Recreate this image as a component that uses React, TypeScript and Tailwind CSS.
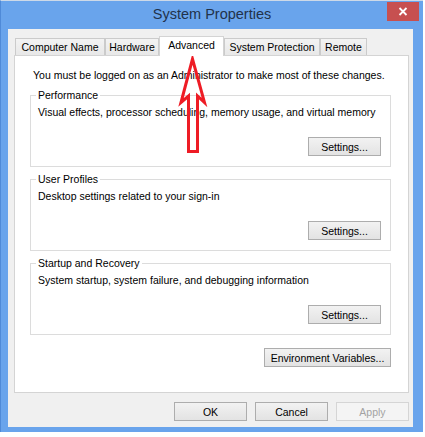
import React from "react";

const btn =
  "h-[19px] flex items-center justify-center border border-[#adadad] bg-gradient-to-b from-[#f2f2f2] to-[#e3e3e3] text-black leading-[12px]";

function Tab({ label, w, selected }: { label: string; w: string; selected?: boolean }) {
  if (selected) {
    return (
      <div
        className={`${w} h-[20px] -mb-px relative z-10 bg-white border border-b-0 border-[#d4d4d4] flex justify-center pt-[2px] leading-[12px]`}
      >
        {label}
      </div>
    );
  }
  return (
    <div
      className={`${w} h-[17px] bg-gradient-to-b from-[#f3f3f3] to-[#e8e8e8] border border-b-0 border-[#cbcbcb] flex items-center justify-center leading-[12px]`}
    >
      {label}
    </div>
  );
}

function Group({
  title,
  desc,
  focused,
  first,
}: {
  title: string;
  desc: string;
  focused?: boolean;
  first?: boolean;
}) {
  return (
    <div
      className={`${first ? "mt-[14px]" : "mt-[12px]"} h-[72px] border border-[#dcdcdc] flex flex-col pl-[7px]`}
    >
      <span className="-mt-[7px] -ml-[2px] px-[2px] self-start bg-white leading-[12px]">{title}</span>
      <div className="mt-[5px] leading-[12px]">{desc}</div>
      <div
        className={`${btn} w-[73px] self-end mt-auto mb-[10px] mr-[9px] ${
          focused ? "border-[#5a9fe0]" : ""
        }`}
      >
        Settings...
      </div>
    </div>
  );
}

export default function App() {
  return (
    <div
      className="w-[425px] h-[437px] bg-white relative text-[10.5px] text-black"
      style={{ fontFamily: "'Liberation Sans', Arial, sans-serif" }}
    >
      <div className="w-[423px] h-[432px] bg-[#69a4ec] border-t border-[#cdd9e8] border-l border-l-[#4f8ad8] flex flex-col relative">
        <div className="h-[28px] flex items-center justify-center text-[14.5px] text-[#22324a]">
          System Properties
        </div>
        <div className="absolute right-[4px] top-[1px] w-[32px] h-[19px] bg-[#c75050] flex items-center justify-center">
          <svg width="10" height="9" viewBox="0 0 10 9">
            <path d="M1.5 1 L8.5 8 M8.5 1 L1.5 8" stroke="white" strokeWidth="1.8" />
          </svg>
        </div>
        <div className="ml-[7px] w-[405px] h-[398px] bg-[#f0f0f0] flex flex-col pl-[6px] pr-[4px]">
          <div className="h-[26px] flex items-end pl-[1px]">
            <Tab label="Computer Name" w="w-[90px]" />
            <Tab label="Hardware" w="w-[54px]" />
            <Tab label="Advanced" w="w-[65px]" selected />
            <Tab label="System Protection" w="w-[96px]" />
            <Tab label="Remote" w="w-[47px]" />
          </div>
          <div className="h-[338px] bg-white border border-[#d4d4d4] flex flex-col pl-[15px] pr-[17px] pt-[13px]">
            <div className="ml-[3px] leading-[12px]">
              You must be logged on as an Administrator to make most of these changes.
            </div>
            <Group
              first
              focused
              title="Performance"
              desc="Visual effects, processor scheduling, memory usage, and virtual memory"
            />
            <Group title="User Profiles" desc="Desktop settings related to your sign-in" />
            <Group
              title="Startup and Recovery"
              desc="System startup, system failure, and debugging information"
            />
            <div className={`${btn} w-[127px] self-end mt-[13px]`}>Environment Variables...</div>
          </div>
          <div className="mt-[9px] flex justify-end gap-[8px]">
            <div className={`${btn} w-[73px]`}>OK</div>
            <div className={`${btn} w-[73px]`}>Cancel</div>
            <div className="w-[73px] h-[19px] flex items-center justify-center border border-[#d5d5d5] bg-[#f4f4f4] text-[#a3a3a3] leading-[12px]">
              Apply
            </div>
          </div>
        </div>
      </div>
      <svg className="absolute left-0 top-0 pointer-events-none" width="425" height="437">
        <polygon
          points="192.5,59 181,102.5 188.5,96 188.5,151.5 197.5,151.5 197.5,96 204.5,102.5"
          fill="none"
          stroke="#ee1c25"
          strokeWidth="3"
          strokeLinejoin="miter"
        />
      </svg>
    </div>
  );
}
